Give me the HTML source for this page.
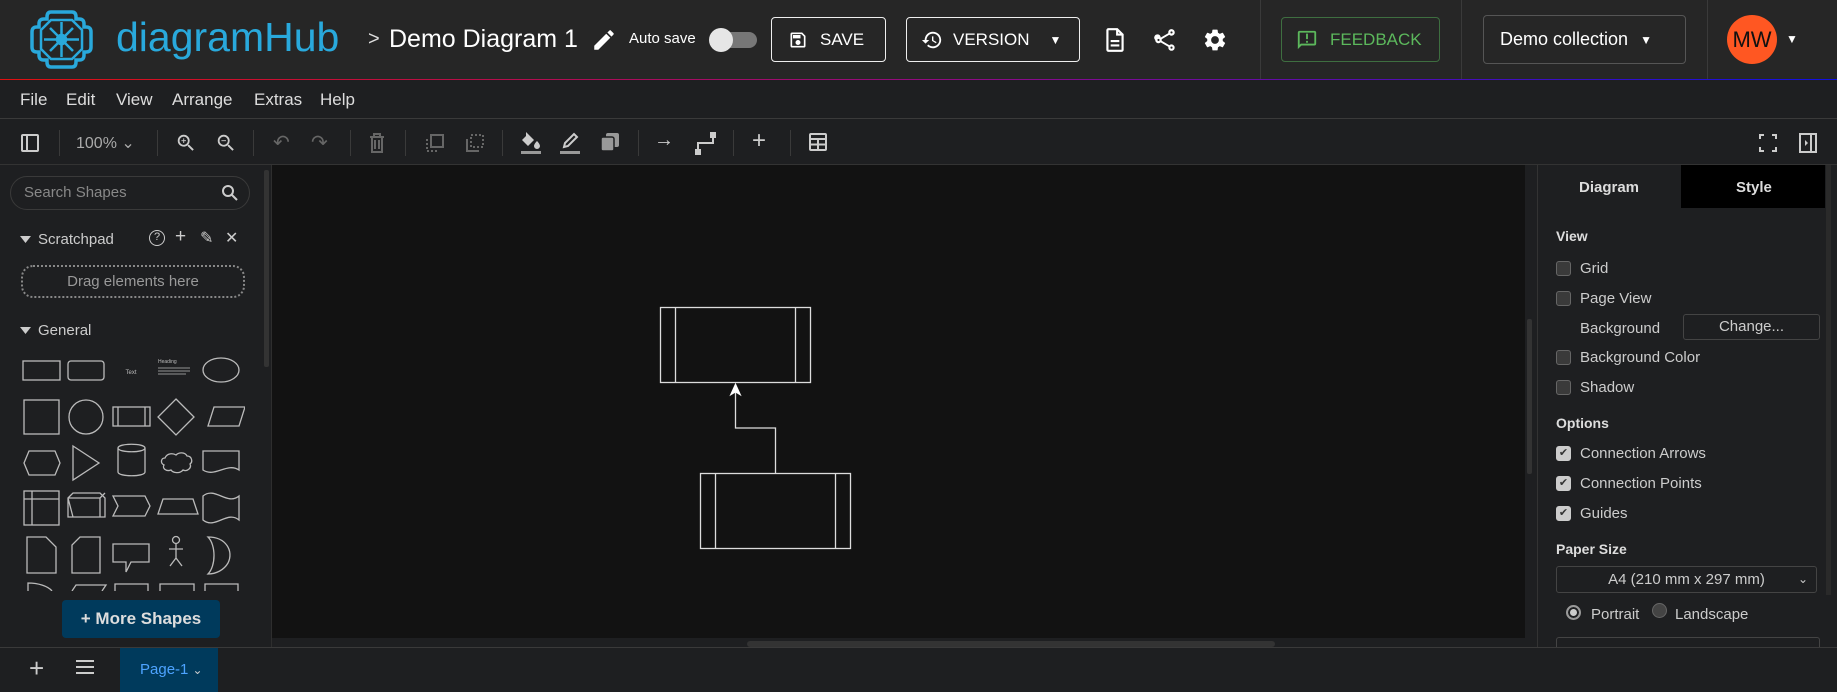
<!DOCTYPE html>
<html><head><meta charset="utf-8">
<style>
*{box-sizing:border-box;margin:0;padding:0}
body{width:1837px;height:692px;overflow:hidden;background:#1e1f21;font-family:"Liberation Sans",sans-serif;color:#ddd;position:relative}
.a{position:absolute}
.hdr{left:0;top:0;width:1837px;height:80px;background:#262626}
.grad{left:0;top:79px;width:1837px;height:2px;background:linear-gradient(90deg,#e01010,#8a0a8a 55%,#1010e0)}
.btn{border:1px solid #eee;border-radius:4px;color:#fff;font-size:17px;display:flex;align-items:center}
.sep{width:1px;background:#3a3a3a}
.menu{top:80px;left:0;width:1837px;height:39px;background:#1e1f21;border-bottom:1px solid #3a3a3a}
.menu span{position:absolute;top:10px;font-size:17px;color:#ddd}
.tb{top:120px;left:0;width:1837px;height:45px;background:#1e1f21;border-bottom:1px solid #333}
.ts{position:absolute;top:10px;width:1px;height:26px;background:#3a3a3a}
.lbl{position:absolute;font-size:15px;color:#ccc}
.cb{position:absolute;left:1556px;width:15px;height:15px;border:1px solid #666;border-radius:3px;background:#3a3a3a}
.cb.on{background:#ccc;border-color:#ccc}
.h{position:absolute;font-size:15px;font-weight:bold;color:#ddd}
</style></head><body>
<div class="a hdr"></div>
<svg class="a" style="left:29px;top:8px" width="65" height="63" viewBox="0 0 65 63" fill="none" stroke="#29a9dc" stroke-width="3.5">
<path d="M22 4h21c3 0 4 2 4 5v2h3c4 0 5 2 5 5v3h2c3 0 5 1 5 5v15c0 4-2 5-5 5h-2v3c0 3-1 5-5 5h-3v2c0 3-1 5-4 5H22c-3 0-4-2-4-5v-2h-3c-4 0-5-2-5-5v-3H8c-3 0-5-1-5-5V24c0-4 2-5 5-5h2v-3c0-3 1-5 5-5h3V9c0-3 1-5 4-5z"/>
<path d="M22 12h21l10 10v19L43 51H22L12 41V22z" stroke-width="2.5"/>
<circle cx="32.5" cy="31.5" r="4" fill="#29a9dc"/>
<path d="M32.5 14v12M32.5 37v12M15 31.5h12M38 31.5h12M21 20l8 8M44 20l-8 8M21 43l8-8M44 43l-8-8" stroke-width="2.5"/>
</svg>
<div class="a" style="left:116px;top:14px;font-size:41px;color:#29a9dc">diagramHub</div>
<div class="a" style="left:368px;top:28px;font-size:20px;color:#ddd">&gt;</div>
<div class="a" style="left:389px;top:25px;font-size:25px;color:#fff">Demo Diagram 1</div>
<svg class="a" style="left:591px;top:27px" width="26" height="26" viewBox="0 0 24 24"><path fill="#fff" d="M3 17.25V21h3.75L17.81 9.94l-3.75-3.75L3 17.25zM20.71 7.04a1 1 0 000-1.41l-2.34-2.34a1 1 0 00-1.41 0l-1.83 1.83 3.75 3.75 1.83-1.83z"/></svg>
<div class="a" style="left:629px;top:30px;font-size:15px;color:#fff">Auto save</div>
<div class="a" style="left:712px;top:32px;width:45px;height:16px;border-radius:8px;background:#777"></div>
<div class="a" style="left:709px;top:28px;width:24px;height:24px;border-radius:12px;background:#e6e6e6"></div>
<div class="a btn" style="left:771px;top:17px;width:115px;height:45px;padding-left:16px">
<svg width="20" height="20" viewBox="0 0 24 24" style="margin-right:12px"><path fill="#fff" d="M17 3H5a2 2 0 00-2 2v14a2 2 0 002 2h14a2 2 0 002-2V7l-4-4zm2 16H5V5h11.17L19 7.83V19zm-7-7a3 3 0 100 6 3 3 0 000-6zM6 6h9v4H6z"/></svg>SAVE</div>
<div class="a btn" style="left:906px;top:17px;width:174px;height:45px;padding-left:14px">
<svg width="22" height="22" viewBox="0 0 24 24" style="margin-right:10px"><path fill="#fff" d="M13 3a9 9 0 00-9 9H1l3.9 3.9L9 12H6a7 7 0 117 7 7 7 0 01-4.95-2.05l-1.42 1.42A9 9 0 1013 3zm-1 5v5l4.28 2.54.72-1.21-3.5-2.08V8z"/></svg>VERSION<span style="margin-left:20px;font-size:12px">▼</span></div>
<svg class="a" style="left:1102px;top:26px" width="26" height="28" viewBox="0 0 24 24"><path fill="none" stroke="#fff" stroke-width="2" d="M6 2h8l5 5v14a1 1 0 01-1 1H6a1 1 0 01-1-1V3a1 1 0 011-1zM14 2v5h5"/><path stroke="#fff" stroke-width="2" d="M8 13h8M8 17h8"/></svg>
<svg class="a" style="left:1152px;top:26px" width="26" height="28" viewBox="0 0 24 24"><path fill="#fff" d="M18 16.08c-.76 0-1.44.3-1.960.77L8.91 12.7c.05-.23.09-.46.09-.7s-.04-.47-.09-.7l7.05-4.11A2.99 2.99 0 0021 5a3 3 0 10-5.91.7L8.04 9.81A3 3 0 103 12a3 3 0 005.04 2.19l7.12 4.16c-.05.21-.08.43-.08.65A2.92 2.92 0 1018 16.08zM18 4a1 1 0 110 2 1 1 0 010-2zM6 13a1 1 0 110-2 1 1 0 010 2zm12 7.02a1 1 0 110-2 1 1 0 010 2z"/></svg>
<svg class="a" style="left:1202px;top:27px" width="26" height="26" viewBox="0 0 24 24"><path fill="#fff" d="M19.14 12.94c.04-.3.06-.61.06-.94s-.02-.64-.07-.94l2.03-1.58a.49.49 0 00.12-.61l-1.92-3.32a.49.49 0 00-.59-.22l-2.390.96a7 7 0 00-1.62-.94l-.36-2.54a.48.48 0 00-.48-.41h-3.84a.48.48 0 00-.47.41l-.36 2.54c-.59.24-1.130.57-1.62.94l-2.39-.96a.48.48 0 00-.59.22L2.74 8.87a.47.47 0 00.12.61l2.03 1.58c-.05.3-.09.63-.09.94s.02.64.07.94l-2.03 1.58a.49.49 0 00-.12.61l1.92 3.32c.12.22.37.29.59.22l2.39-.96c.5.38 1.03.7 1.62.94l.36 2.54c.05.24.24.41.48.41h3.84c.24 0 .44-.17.47-.41l.36-2.54c.59-.24 1.13-.56 1.62-.94l2.39.96c.22.08.47 0 .59-.22l1.92-3.32a.47.47 0 00-.12-.61l-2.01-1.58zM12 15.6A3.6 3.6 0 1112 8.4a3.6 3.6 0 010 7.2z"/></svg>
<div class="a sep" style="left:1260px;top:0;height:80px"></div>
<div class="a btn" style="left:1281px;top:17px;width:159px;height:45px;border-color:#3e6e40;color:#5cb85c;padding-left:14px;font-size:17px">
<svg width="22" height="22" viewBox="0 0 24 24" style="margin-right:12px"><path fill="#5cb85c" d="M20 2H4a2 2 0 00-2 2v18l4-4h14a2 2 0 002-2V4a2 2 0 00-2-2zm0 14H5.17L4 17.17V4h16v12zM11 5h2v6h-2zm0 8h2v2h-2z"/></svg>FEEDBACK</div>
<div class="a sep" style="left:1461px;top:0;height:80px"></div>
<div class="a btn" style="left:1483px;top:15px;width:203px;height:49px;border-color:#555;padding-left:16px;font-size:18px">Demo collection<span style="margin-left:12px;font-size:12px">▼</span></div>
<div class="a sep" style="left:1707px;top:0;height:80px"></div>
<div class="a" style="left:1727px;top:15px;width:50px;height:49px;border-radius:50%;background:#ff5722;color:#111;font-size:22px;text-align:center;line-height:49px">MW</div>
<div class="a" style="left:1786px;top:32px;font-size:12px;color:#fff">▼</div>
<div class="a grad"></div>

<div class="a menu"><span style="left:20px">File</span><span style="left:66px">Edit</span><span style="left:116px">View</span><span style="left:172px">Arrange</span><span style="left:254px">Extras</span><span style="left:320px">Help</span></div>

<div class="a tb">
<svg class="a" style="left:20px;top:13px" width="20" height="20" viewBox="0 0 20 20" fill="none" stroke="#ccc" stroke-width="2"><rect x="2" y="2" width="16" height="16" rx="1"/><path d="M7 2v16"/></svg>
<div class="ts" style="left:59px"></div>
<div class="a" style="left:76px;top:13px;font-size:16px;color:#aaa">100% ⌄</div>
<div class="ts" style="left:157px"></div>
<svg class="a" style="left:175px;top:12px" width="22" height="22" viewBox="0 0 24 24"><path fill="#ccc" d="M15.5 14h-.79l-.28-.27A6.47 6.47 0 0016 9.5 6.5 6.5 0 109.5 16c1.61 0 3.09-.59 4.23-1.57l.27.28v.79l5 4.99L20.49 19l-4.99-5zm-6 0C7.01 14 5 11.99 5 9.5S7.01 5 9.5 5 14 7.01 14 9.5 11.99 14 9.5 14zm.5-7H9v2H7v1h2v2h1v-2h2V9h-2z"/></svg>
<svg class="a" style="left:215px;top:12px" width="22" height="22" viewBox="0 0 24 24"><path fill="#ccc" d="M15.5 14h-.79l-.28-.27A6.47 6.47 0 0016 9.5 6.5 6.5 0 109.5 16c1.61 0 3.09-.59 4.23-1.57l.27.28v.79l5 4.99L20.49 19l-4.99-5zm-6 0C7.01 14 5 11.990 5 9.5S7.01 5 9.5 5 14 7.01 14 9.5 11.99 14 9.5 14zM7 9h5v1H7z"/></svg>
<div class="ts" style="left:253px"></div>
<div class="a" style="left:273px;top:10px;font-size:20px;color:#666">↶</div>
<div class="a" style="left:311px;top:10px;font-size:20px;color:#666">↷</div>
<div class="ts" style="left:350px"></div>
<svg class="a" style="left:367px;top:12px" width="20" height="22" viewBox="0 0 20 22" fill="none" stroke="#666" stroke-width="2"><path d="M3 5h14M7 5V2h6v3M5 5v15h10V5M8 8v9M12 8v9"/></svg>
<div class="ts" style="left:405px"></div>
<svg class="a" style="left:424px;top:12px" width="22" height="22" viewBox="0 0 22 22" fill="none" stroke="#666" stroke-width="2"><rect x="7" y="3" width="12" height="12"/><path d="M3 7v12h12" stroke-dasharray="2 2"/></svg>
<svg class="a" style="left:464px;top:12px" width="22" height="22" viewBox="0 0 22 22" fill="none" stroke="#666" stroke-width="2"><rect x="7" y="3" width="12" height="12" stroke-dasharray="2 2"/><path d="M3 7v12h12"/></svg>
<div class="ts" style="left:502px"></div>
<svg class="a" style="left:520px;top:10px" width="22" height="26" viewBox="0 0 22 26"><path fill="#ccc" d="M6 2l8 8-6 6-6-6 4-4zm11 9s-3 3-3 5a3 3 0 006 0c0-2-3-5-3-5z"/><rect x="1" y="21" width="20" height="3" fill="#999"/></svg>
<svg class="a" style="left:559px;top:10px" width="22" height="26" viewBox="0 0 22 26"><path fill="none" stroke="#ccc" stroke-width="2" d="M5 17l1-4 9-9 3 3-9 9z"/><rect x="1" y="21" width="20" height="3" fill="#999"/></svg>
<svg class="a" style="left:599px;top:11px" width="22" height="22" viewBox="0 0 22 22"><rect x="7" y="2" width="13" height="14" rx="2" fill="#999"/><rect x="2" y="6" width="13" height="14" rx="2" fill="#999" stroke="#1e1f21" stroke-width="1.5"/></svg>
<div class="ts" style="left:638px"></div>
<div class="a" style="left:654px;top:9px;font-size:20px;color:#ccc">→</div>
<svg class="a" style="left:694px;top:11px" width="24" height="24" viewBox="0 0 24 24" fill="none" stroke="#ccc" stroke-width="2"><path d="M4 20V12h15V4"/><rect x="2" y="19" width="4" height="4" fill="#ccc"/><rect x="17" y="2" width="4" height="4" fill="#ccc"/></svg>
<div class="ts" style="left:733px"></div>
<div class="a" style="left:752px;top:7px;font-size:24px;color:#ccc">+</div>
<div class="ts" style="left:790px"></div>
<svg class="a" style="left:808px;top:12px" width="20" height="20" viewBox="0 0 20 20" fill="none" stroke="#ccc" stroke-width="2"><rect x="2" y="2" width="16" height="16" rx="1"/><path d="M2 7h16M2 12.5h16M10 7v11"/></svg>
<svg class="a" style="left:1758px;top:13px" width="20" height="20" viewBox="0 0 20 20" fill="none" stroke="#ccc" stroke-width="2"><path d="M2 6V2h4M14 2h4v4M18 14v4h-4M6 18H2v-4"/></svg>
<svg class="a" style="left:1798px;top:12px" width="20" height="22" viewBox="0 0 20 22" fill="none" stroke="#ccc" stroke-width="2"><rect x="2" y="2" width="16" height="18"/><path d="M13 2v18"/><path d="M7 8l3 3-3 3z" fill="#ccc" stroke="none"/></svg>
</div>

<!-- left panel -->
<div class="a" style="left:10px;top:176px;width:240px;height:34px;border:1px solid #3a3a3a;border-radius:17px"></div>
<div class="a" style="left:24px;top:184px;font-size:15px;color:#888">Search Shapes</div>
<svg class="a" style="left:221px;top:184px" width="18" height="18" viewBox="0 0 18 18" fill="none" stroke="#ccc" stroke-width="2"><circle cx="7" cy="7" r="5"/><path d="M11 11l5 5"/></svg>
<div class="a" style="left:264px;top:170px;width:5px;height:197px;background:#333;border-radius:2px"></div>
<svg class="a" style="left:20px;top:236px" width="11" height="7"><path d="M0 0h11L5.5 7z" fill="#ccc"/></svg>
<div class="a" style="left:38px;top:231px;font-size:15px;color:#ccc">Scratchpad</div>
<div class="a" style="left:149px;top:230px;width:16px;height:16px;border:1.5px solid #ccc;border-radius:50%;font-size:11px;text-align:center;line-height:13px;color:#ccc">?</div>
<div class="a" style="left:175px;top:226px;font-size:19px;color:#ccc">+</div>
<div class="a" style="left:200px;top:228px;font-size:16px;color:#ccc">✎</div>
<div class="a" style="left:225px;top:228px;font-size:16px;color:#ccc">✕</div>
<div class="a" style="left:21px;top:265px;width:224px;height:33px;border:2px dotted #888;border-radius:12px;text-align:center;font-size:15px;line-height:29px;color:#999">Drag elements here</div>
<svg class="a" style="left:20px;top:327px" width="11" height="7"><path d="M0 0h11L5.5 7z" fill="#ccc"/></svg>
<div class="a" style="left:38px;top:322px;font-size:15px;color:#ccc">General</div>
<svg class="a" style="left:20px;top:355px" width="225" height="236" viewBox="20 355 225 236" fill="none" stroke="#bbb" stroke-width="1.3">
<rect x="23" y="361" width="37" height="19"/><rect x="68" y="361" width="36" height="19" rx="3"/>
<text x="131" y="374" fill="#bbb" stroke="none" font-size="6" text-anchor="middle" font-family="Liberation Sans">Text</text>
<text x="158" y="363" fill="#bbb" stroke="none" font-size="5" font-family="Liberation Sans">Heading</text>
<path d="M158 368h32M158 371h32M158 374h28" stroke-width="0.8"/>
<ellipse cx="221" cy="370" rx="18" ry="12"/>
<rect x="24" y="400" width="35" height="34"/><circle cx="86" cy="417" r="17"/>
<rect x="113" y="407" width="37" height="19"/><path d="M118 407v19M145 407v19"/>
<path d="M176 399l18 18-18 18-18-18z"/><path d="M208 426l6-19h31l-6 19z"/>
<path d="M29 451h26l5 12-5 12H29l-5-12z"/><path d="M73 446l26 17-26 17z"/>
<path d="M118 448c0-5 27-5 27 0v24c0 5-27 5-27 0zM118 448c0 5 27 5 27 0"/>
<path d="M165 458c2-5 8-5 11-3 3-3 9-3 11 1 5 0 6 6 3 8 2 4-3 8-7 6-3 4-10 3-12 0-5 2-9-2-7-5-4-2-3-7 1-7z"/>
<path d="M203 451h36v19c-12-8-24 8-36 0z"/>
<rect x="24" y="491" width="35" height="34"/><path d="M24 499h35M32 491v34"/>
<path d="M68 498l5-5h27l5 5v19H68zM68 498h32l5-5M100 498v19M68 498l5 19"/>
<path d="M113 496h32l5 10-5 10h-32l5-10z"/><path d="M158 514l5-15h30l5 15z"/>
<path d="M203 496c12-10 24 10 36 0v24c-12-10-24 10-36 0z"/>
<path d="M27 537h19l10 10v26H27z"/><path d="M80 537h20v36H72v-28z"/>
<path d="M113 544h36v18h-18l-5 10v-10h-13z"/>
<circle cx="176" cy="540" r="3.5"/><path d="M176 544v14M169 549h14M176 558l-6 8M176 558l6 8"/>
<path d="M208 537c18 0 26 14 20 26-4 7-12 11-20 11 8-8 8-29 0-37z"/>
<path d="M28 591v-8c10 0 20 3 24 8M72 591l4-6h30l-4 6M115 591v-7h33v7M160 591v-7h34v7M205 591v-7h33v7"/>
</svg>
<div class="a" style="left:62px;top:600px;width:158px;height:38px;background:#003a5c;border-radius:4px;color:#ddd;font-weight:bold;font-size:17px;text-align:center;line-height:38px">+ More Shapes</div>
<div class="a" style="left:271px;top:165px;width:1px;height:483px;background:#2e2e2e"></div>

<!-- canvas -->
<div class="a" style="left:272px;top:165px;width:1253px;height:473px;background:#121212"></div>
<div class="a" style="left:1527px;top:319px;width:5px;height:155px;background:#333;border-radius:2px"></div>
<div class="a" style="left:747px;top:641px;width:528px;height:6px;background:#333;border-radius:3px"></div>
<svg class="a" style="left:0;top:0" width="1837" height="692" fill="none" stroke="#ddd" stroke-width="1.3">
<rect x="660.5" y="307.5" width="150" height="75"/><path d="M675.5 308v75M795.5 308v75"/>
<rect x="700.5" y="473.5" width="150" height="75"/><path d="M715.5 474v75M835.5 474v75"/>
<path d="M775.5 473V428H735.5V392"/>
<path d="M735.5 384l-5 11 5-3 5 3z" fill="#fff" stroke="#fff" stroke-width="1"/>
</svg>

<!-- right panel -->
<div class="a" style="left:1537px;top:165px;width:1px;height:485px;background:#333"></div>
<div class="a" style="left:1681px;top:165px;width:144px;height:43px;background:#000"></div>
<div class="h" style="left:1579px;top:179px">Diagram</div>
<div class="h" style="left:1736px;top:179px">Style</div>
<div class="a" style="left:1826px;top:165px;width:5px;height:430px;background:#2a2a2a"></div>
<div class="h" style="left:1556px;top:228px;font-size:14px">View</div>
<div class="cb" style="top:261px"></div><div class="lbl" style="left:1580px;top:260px">Grid</div>
<div class="cb" style="top:291px"></div><div class="lbl" style="left:1580px;top:290px">Page View</div>
<div class="lbl" style="left:1580px;top:320px">Background</div>
<div class="a" style="left:1683px;top:314px;width:137px;height:26px;border:1px solid #444;border-radius:3px;text-align:center;font-size:15px;line-height:24px;color:#ccc">Change...</div>
<div class="cb" style="top:350px"></div><div class="lbl" style="left:1580px;top:349px">Background Color</div>
<div class="cb" style="top:380px"></div><div class="lbl" style="left:1580px;top:379px">Shadow</div>
<div class="h" style="left:1556px;top:415px;font-size:14px">Options</div>
<div class="cb on" style="top:446px;font-size:11px;color:#333;text-align:center;line-height:13px">✔</div><div class="lbl" style="left:1580px;top:445px">Connection Arrows</div>
<div class="cb on" style="top:476px;font-size:11px;color:#333;text-align:center;line-height:13px">✔</div><div class="lbl" style="left:1580px;top:475px">Connection Points</div>
<div class="cb on" style="top:506px;font-size:11px;color:#333;text-align:center;line-height:13px">✔</div><div class="lbl" style="left:1580px;top:505px">Guides</div>
<div class="h" style="left:1556px;top:541px;font-size:14px">Paper Size</div>
<div class="a" style="left:1556px;top:566px;width:261px;height:27px;border:1px solid #444;border-radius:3px;text-align:center;font-size:15px;line-height:25px;color:#ccc">A4 (210 mm x 297 mm)<span style="position:absolute;right:8px;font-size:12px">⌄</span></div>
<div class="a" style="left:1566px;top:605px;width:15px;height:15px;border-radius:50%;border:2px solid #999;background:#ccc;box-shadow:inset 0 0 0 2px #1e1f21"></div>
<div class="lbl" style="left:1591px;top:606px">Portrait</div>
<div class="a" style="left:1652px;top:603px;width:15px;height:15px;border-radius:50%;background:#444;border:1px solid #666"></div>
<div class="lbl" style="left:1675px;top:606px">Landscape</div>
<div class="a" style="left:1556px;top:637px;width:264px;height:20px;border:1px solid #444;border-radius:3px"></div>

<!-- bottom bar -->
<div class="a" style="left:0;top:647px;width:1837px;height:45px;background:#1e1f21;border-top:1px solid #3a3a3a"></div>
<div class="a" style="left:29px;top:653px;font-size:26px;color:#ccc">+</div>
<div class="a" style="left:76px;top:660px;width:18px;height:14px;border-top:2px solid #ccc;border-bottom:2px solid #ccc"></div>
<div class="a" style="left:76px;top:666px;width:18px;height:2px;background:#ccc"></div>
<div class="a" style="left:120px;top:648px;width:98px;height:44px;background:#003a5c;color:#4da3ff;font-size:15px;line-height:44px;padding-left:20px">Page-1 <span style="font-size:12px;color:#ccc">⌄</span></div>
</body></html>
